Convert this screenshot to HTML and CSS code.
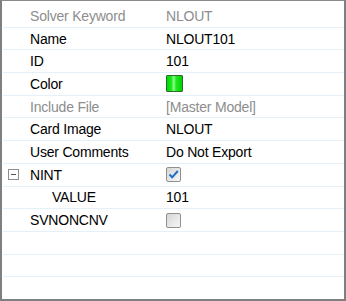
FILE: index.html
```html
<!DOCTYPE html>
<html lang="en">
<head>
    <meta charset="UTF-8">
    <title>Properties</title>
    <link rel="stylesheet" href="styles.css">
</head>
<body>
    <div class="grid">
        <div class="row disabled">
            <div class="label"><span class="gutter"></span>Solver Keyword</div>
            <div class="value">NLOUT</div>
        </div>
        <div class="row">
            <div class="label"><span class="gutter"></span>Name</div>
            <div class="value">NLOUT101</div>
        </div>
        <div class="row">
            <div class="label"><span class="gutter"></span>ID</div>
            <div class="value">101</div>
        </div>
        <div class="row">
            <div class="label"><span class="gutter"></span>Color</div>
            <div class="value"><span class="swatch"></span></div>
        </div>
        <div class="row disabled">
            <div class="label"><span class="gutter"></span>Include File</div>
            <div class="value">[Master Model]</div>
        </div>
        <div class="row">
            <div class="label"><span class="gutter"></span>Card Image</div>
            <div class="value">NLOUT</div>
        </div>
        <div class="row">
            <div class="label"><span class="gutter"></span>User Comments</div>
            <div class="value">Do Not Export</div>
        </div>
        <div class="row">
            <div class="label"><span class="gutter"><span class="toggle"></span></span>NINT</div>
            <div class="value">
                <span class="check">
                    <svg width="11" height="11" viewBox="0 0 11 11"><path d="M1.5 5.5 L4.2 8.3 L9.8 2" fill="none" stroke="#1f6fc4" stroke-width="2"/></svg>
                </span>
            </div>
        </div>
        <div class="row">
            <div class="label child"><span class="gutter"></span>VALUE</div>
            <div class="value">101</div>
        </div>
        <div class="row">
            <div class="label"><span class="gutter"></span>SVNONCNV</div>
            <div class="value"><span class="check"></span></div>
        </div>
        <div class="row"><div class="label"></div><div class="value"></div></div>
        <div class="row"><div class="label"></div><div class="value"></div></div>
        <div class="row"><div class="label"></div><div class="value"></div></div>
    </div>
</body>
</html>
```

FILE: styles.css
```css
body {
    margin: 0;
    font-family: 'Liberation Sans', Arial, sans-serif;
    font-size: 14px;
    letter-spacing: -0.2px;
    color: #000;
    background: #fff;
}

.grid {
    width: 346px;
    height: 301px;
    box-sizing: border-box;
    border: 2px solid #7f7f7f;
    border-top: 1px solid #8a8a8a;
    padding-top: 4px;
    padding-left: 1px;
    overflow: hidden;
}

.row {
    display: grid;
    grid-template-columns: 163px 1fr;
    height: 22.7px;
    box-sizing: border-box;
    border-bottom: 1px solid #e4f1f9;
}

.label,
.value {
    display: flex;
    align-items: center;
    white-space: nowrap;
}

.gutter {
    width: 27px;
    flex: none;
    display: flex;
    align-items: center;
}

.label.child {
    padding-left: 22px;
}

.disabled {
    color: #8d8d8d;
}

.toggle {
    position: relative;
    width: 9px;
    height: 9px;
    margin-left: 5px;
    border: 1px solid #8e8e8e;
    background: #fff;
}

.toggle::after {
    content: "";
    position: absolute;
    left: 2px;
    top: 4px;
    width: 5px;
    height: 1px;
    background: #555;
}

.swatch {
    width: 15px;
    height: 15px;
    border: 1px solid #2e6b2e;
    border-radius: 1px;
    background: linear-gradient(90deg, #00d800 0%, #1fe81f 30%, #8cff8c 45%, #22e822 60%, #00d000 100%);
}

.check {
    width: 13px;
    height: 13px;
    border: 1px solid #8f8f8f;
    border-radius: 2px;
    background: linear-gradient(135deg, #d6d6d6, #f6f6f6);
    display: flex;
    align-items: center;
    justify-content: center;
}
```
